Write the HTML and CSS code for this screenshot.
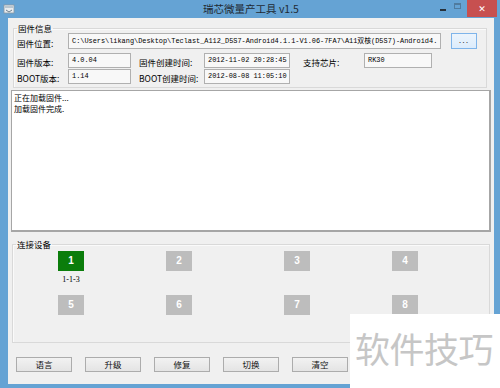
FILE: index.html
```html
<!DOCTYPE html>
<html lang="zh">
<head>
<meta charset="utf-8">
<title>瑞芯微量产工具 v1.5</title>
<link rel="stylesheet" href="styles.css">
</head>
<body>
<div class="window">
  <div class="titlebar">
    <div class="tb-left">
      <svg class="app-icon" width="12" height="12" viewBox="0 0 12 12">
        <rect x="1" y="2" width="10" height="8" fill="#e8ecef" stroke="#8a98a4" stroke-width="0.8"/>
        <rect x="2" y="3" width="8" height="2" fill="#b9c6d0"/>
        <path d="M3 7 L6 9 L9 7" fill="none" stroke="#6d7e8c" stroke-width="1"/>
      </svg>
    </div>
    <div class="title">瑞芯微量产工具 v1.5</div>
    <div class="controls">
      <span class="ctl ctl-min"><span class="min-bar"></span></span>
      <span class="ctl ctl-max"><span class="max-box"></span></span>
      <span class="ctl ctl-close">✕</span>
    </div>
  </div>
  <div class="client">
    <fieldset class="group info">
      <legend>固件信息</legend>
      <div class="info-body">
        <div class="row row-path">
          <span class="lbl">固件位置:</span>
          <span class="field field-path">C:\Users\likang\Desktop\Teclast_A112_D5S7-Android4.1.1-V1.06-7FA7\A11双核(D5S7)-Android4.</span>
          <span class="browse">...</span>
        </div>
        <div class="row">
          <span class="lbl">固件版本:</span>
          <span class="field field-ver">4.0.04</span>
          <span class="lbl lbl-time">固件创建时间:</span>
          <span class="field field-time">2012-11-02 20:28:45</span>
          <span class="lbl lbl-chip">支持芯片:</span>
          <span class="field field-chip">RK30</span>
        </div>
        <div class="row">
          <span class="lbl">BOOT版本:</span>
          <span class="field field-ver">1.14</span>
          <span class="lbl lbl-time">BOOT创建时间:</span>
          <span class="field field-time">2012-08-08 11:05:10</span>
        </div>
      </div>
    </fieldset>

    <div class="log">
      <div>正在加载固件...</div>
      <div>加载固件完成.</div>
    </div>

    <fieldset class="group devices">
      <legend>连接设备</legend>
      <div class="dev-grid">
        <div class="dev-cell"><span class="dev on">1</span><span class="dev-label">1-1-3</span></div>
        <div class="dev-cell"><span class="dev">2</span></div>
        <div class="dev-cell"><span class="dev">3</span></div>
        <div class="dev-cell"><span class="dev">4</span></div>
        <div class="dev-cell"><span class="dev">5</span></div>
        <div class="dev-cell"><span class="dev">6</span></div>
        <div class="dev-cell"><span class="dev">7</span></div>
        <div class="dev-cell"><span class="dev">8</span></div>
      </div>
    </fieldset>

    <div class="buttons">
      <span class="btn">语言</span>
      <span class="btn">升级</span>
      <span class="btn">修复</span>
      <span class="btn">切换</span>
      <span class="btn">清空</span>
    </div>
  </div>
  <div class="watermark">软件技巧</div>
</div>
</body>
</html>
```

FILE: styles.css
```css
* { box-sizing: border-box; }
html, body {
  margin: 0;
  padding: 0;
  width: 500px;
  height: 388px;
  overflow: hidden;
}
body {
  font-family: "Noto Sans CJK SC", "Liberation Sans", sans-serif;
  font-size: 8.5px;
  color: #000;
}
.window {
  position: relative;
  width: 500px;
  height: 388px;
  background: #65a3d4;
  display: flex;
  flex-direction: column;
}
.titlebar {
  height: 18px;
  display: grid;
  grid-template-columns: 80px 1fr 80px;
  align-items: center;
}
.tb-left {
  display: flex;
  align-items: center;
  padding-left: 3px;
  height: 18px;
}
.app-icon { display: block; }
.title {
  text-align: center;
  font-size: 10.5px;
  line-height: 18px;
  color: #1f2a33;
  padding-left: 2px;
}
.controls {
  display: flex;
  justify-content: flex-end;
  align-items: flex-start;
  height: 18px;
  padding-right: 3px;
}
.ctl {
  display: flex;
  align-items: center;
  justify-content: center;
  height: 17px;
}
.ctl-min { width: 17px; }
.min-bar {
  display: block;
  width: 6px;
  height: 2px;
  background: #26313b;
  margin-top: 3px;
}
.ctl-max { width: 12px; margin-right: 4px; }
.max-box {
  display: block;
  width: 7px;
  height: 6px;
  border: 1px solid #3c5468;
  border-top-width: 2px;
  margin-top: -6px;
  opacity: 0.5;
}
.ctl-close {
  width: 30px;
  background: #c75050;
  color: #fff;
  font-family: "DejaVu Sans", sans-serif;
  font-size: 9px;
  font-weight: bold;
}

.client {
  flex: 1;
  margin: 0 6px 4px 8px;
  background: #f0f0f0;
  display: flex;
  flex-direction: column;
}

.group {
  margin: 0;
  padding: 0;
  border: 1px solid #d9d9d9;
  box-shadow: inset 1px 1px 0 #fafafa;
  min-width: 0;
}
.group legend {
  margin-left: 3px;
  padding: 0 1px;
  font-size: 8.5px;
  line-height: 10px;
}

.info {
  margin: 5px 7px 0 5px;
}
.info-body {
  padding: 0 0 3px 3px;
}
.row {
  display: flex;
  align-items: center;
  height: 16px;
}
.row-path { margin-bottom: 3px; }
.lbl {
  width: 51px;
  white-space: nowrap;
  font-size: 8.5px;
  padding-top: 3px;
}
.field {
  height: 15px;
  border: 1px solid #b0b0b0;
  background: #f8f8f8;
  font-family: "Liberation Mono", "Noto Sans CJK SC", monospace;
  font-size: 6.9px;
  line-height: 13px;
  padding-left: 3px;
  white-space: nowrap;
  overflow: hidden;
}
.field-path {
  width: 373px;
  height: 16px;
  line-height: 14px;
}
.browse {
  margin-left: 10px;
  width: 26px;
  height: 16px;
  border: 1px solid #7eb4ea;
  background: linear-gradient(#ecf4fc, #dcecfc);
  text-align: center;
  font-size: 9px;
  line-height: 12px;
  letter-spacing: 1px;
  color: #333;
  font-family: "Liberation Sans", sans-serif;
}
.field-ver { width: 63px; }
.lbl-time { width: 65px; margin-left: 8px; }
.field-time { width: 86px; }
.lbl-chip { width: 61px; margin-left: 13px; }
.field-chip { width: 68px; }

.log {
  margin: 2px 3px 0 3px;
  height: 142px;
  background: #fff;
  border: 1px solid #a6a6a6;
  border-right-width: 2px;
  border-bottom-width: 2px;
  padding: 2px 2px;
  font-size: 8px;
  line-height: 10.5px;
}

.devices {
  margin: 7px 4px 0 4px;
  height: 104px;
}
.dev-grid {
  display: grid;
  grid-template-columns: 108px 118px 108px 26px;
  grid-auto-rows: 44px;
  padding: 2px 0 0 45px;
}
.dev-cell {
  display: flex;
  flex-direction: column;
  align-items: center;
  width: 26px;
}
.dev {
  display: block;
  width: 26px;
  height: 20px;
  background: #bdbdbd;
  color: #fff;
  font-family: "Liberation Sans", sans-serif;
  font-weight: bold;
  font-size: 10px;
  line-height: 20px;
  text-align: center;
}
.dev.on { background: #0b7d0b; }
.dev-label {
  margin-top: 4px;
  font-family: "Liberation Serif", serif;
  font-size: 8px;
  line-height: 9px;
  white-space: nowrap;
}

.buttons {
  display: flex;
  gap: 13px;
  margin: 14px 0 0 8px;
}
.btn {
  width: 56px;
  height: 15px;
  border: 1px solid #acacac;
  background: linear-gradient(#f2f2f2, #e4e4e4);
  text-align: center;
  font-size: 8.5px;
  line-height: 13px;
  color: #111;
}

.watermark {
  position: absolute;
  left: 350px;
  top: 314px;
  width: 150px;
  height: 74px;
  background: #fff;
  color: #c6c6c6;
  font-size: 35px;
  line-height: 40px;
  padding: 14px 0 0 5px;
  white-space: nowrap;
  letter-spacing: -0.5px;
}
```
